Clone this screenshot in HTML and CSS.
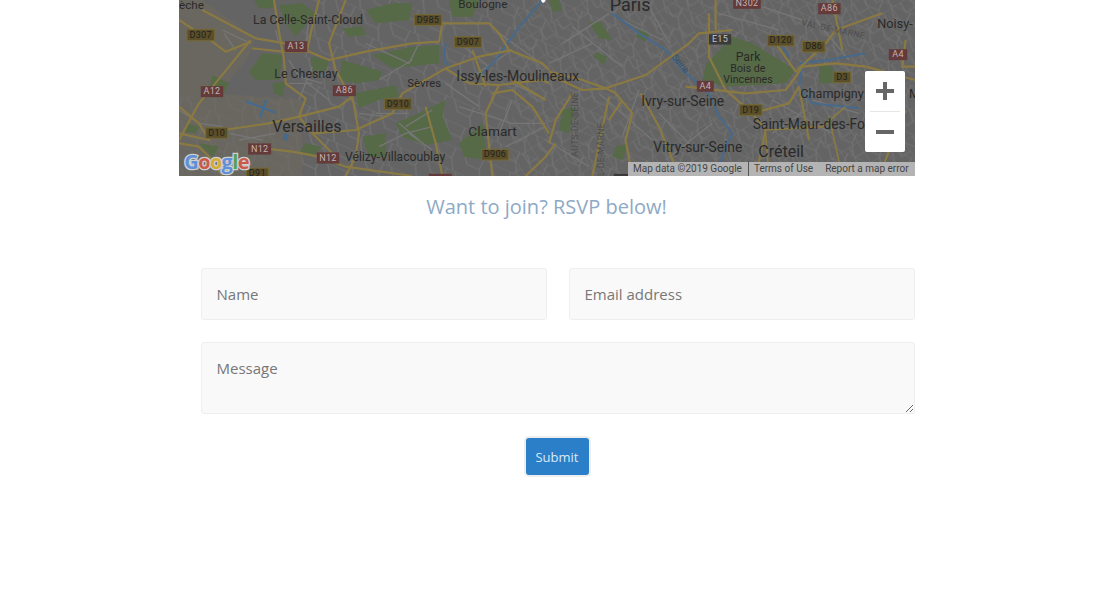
FILE: index.html
```html
<!DOCTYPE html>
<html lang="en">
<head>
<meta charset="utf-8">
<title>RSVP</title>
<link rel="stylesheet" href="styles.css">
</head>
<body>
<main class="page">
  <div class="map">
    <svg class="map-art" viewBox="0 0 2208 528" width="736" height="176" aria-label="Map of Paris and its south-west suburbs">
      <defs>
        <pattern id="streets" width="90" height="66" patternUnits="userSpaceOnUse" patternTransform="rotate(24)">
          <path d="M0 0H90M0 33H40L58 66M40 33V0M64 0L90 33" class="minor-thin"/>
        </pattern>
        <pattern id="streets2" width="60" height="72" patternUnits="userSpaceOnUse" patternTransform="rotate(-32)">
          <path d="M0 0H60M0 0V72M30 0V36H60" class="minor-thin"/>
        </pattern>
      </defs>
      <rect width="2208" height="528" class="land"/>
      <path d="M0 0H70L230 115L210 170L120 280L370 300L370 528H0Z" class="warm"/>
      <rect x="370" width="1838" height="528" fill="url(#streets)"/>
      <rect x="1000" width="1208" height="528" fill="url(#streets2)"/>
      <rect y="290" width="600" height="238" fill="url(#streets)" opacity=".5"/>

      <g class="green">
        <path d="M210 215L250 160L310 165L300 240L230 240Z"/>
        <path d="M300 15L370 10L410 40L350 110L320 70Z"/>
        <path d="M225 0H290L280 25L240 25Z"/>
        <path d="M100 225L150 250L130 290L90 270Z"/>
        <path d="M280 250L320 245L310 290L285 280Z"/>
        <path d="M490 85L550 80L560 105L510 110Z"/>
        <path d="M560 30L640 10L700 10L690 60L590 70Z"/>
        <path d="M395 170L450 180L440 215L400 210Z"/>
        <path d="M490 180L610 215L600 240L530 250L480 240Z"/>
        <path d="M530 280L650 255L660 290L600 300L540 325Z"/>
        <path d="M580 165L700 140L780 135L780 190L640 205Z"/>
        <path d="M650 370L720 340L800 300L790 350L820 420L740 435L670 410Z"/>
        <path d="M550 410L620 400L620 470L570 470Z"/>
        <path d="M840 430L910 370L925 480L855 470Z"/>
        <path d="M810 0H900L880 50L820 50Z"/>
        <path d="M20 370L60 380L50 400L20 395Z"/>
        <path d="M60 430L120 440L100 470Z"/>
        <path d="M380 430L430 440L400 470L360 460Z"/>
        <path d="M1230 65L1265 65L1300 120L1260 115Z"/>
        <path d="M1285 170L1275 195L1245 170L1250 155Z" />
        <path d="M1380 90L1410 100L1400 125L1370 110Z"/>
        <path d="M1580 195L1660 110L1720 130L1850 210L1820 250L1640 260L1570 240Z"/>
        <path d="M1150 330L1190 320L1170 400L1140 390Z"/>
        <path d="M1920 190L1960 200L1970 250L1920 250Z"/>
        <path d="M1310 440L1350 430L1330 480L1300 470Z"/>
        <path d="M1110 0H1140L1150 30L1120 35Z"/>
      </g>

      <g class="minor">
        <path d="M0 330L60 370L130 380M130 90L215 130M135 100L170 150M290 90L300 130M300 60L340 70M390 50L380 140M330 180L360 230L430 250M380 245L450 300M330 250L400 250M400 200L360 300M560 130L690 190L720 130M600 240L700 180M590 340L690 340M690 400L760 450M540 340L620 350M600 440L680 400L760 380M800 250L900 320M840 320L1000 370L1100 370M880 230L1000 150M960 100L1100 200M1000 250L1100 300M1000 300L960 400M980 440L1100 380M830 120L930 200M150 400L250 420M180 420L290 400M660 370L720 420M760 330L680 380"/>
        <path d="M1180 80L1330 200M1330 60L1450 120M1400 0L1470 130M1150 130L1290 40M1110 190L1240 130M1260 280L1420 420M1380 270L1330 410M1440 340L1540 440M1460 480L1600 370M1780 300L1960 400M1780 400L1880 330M1900 300L2040 340M1910 60L2010 180M1620 40L1800 90M1750 20L1870 60M1100 420L1230 500"/>
      </g>

      <g class="water">
        <path d="M1090 0L1010 95L950 180L900 230"/>
        <path d="M800 130L795 180L815 205"/>
        <path d="M1300 40L1380 100L1460 150L1510 210L1590 280L1620 350L1660 400L1640 440L1610 528"/>
        <path d="M1860 190L1950 180L2060 160M1870 200L1860 260L1900 310L2040 325"/>
        <path d="M1810 140L1830 170" />
      </g>
      <path class="water-thick" d="M323 402L318 420"/>
      <path class="plane" d="M200 304L290 338M262 298L243 352"/>

      <g class="road">
        <path d="M70 30L230 115L320 130L390 155L450 180L560 155L700 130L780 125L790 70L930 70L960 100L990 150L1090 190L1110 210"/>
        <path d="M215 120L150 200L60 310L0 420"/>
        <path d="M0 60L100 125L140 155L215 125"/>
        <path d="M220 145L310 155L390 155"/>
        <path d="M285 0L300 95L315 180L320 250L380 295L360 350L480 320L520 290L540 400L530 470L500 528"/>
        <path d="M420 0L395 100L385 150"/>
        <path d="M500 0L450 130L470 210L520 300"/>
        <path d="M0 320L60 370L90 420L0 400"/>
        <path d="M0 430L60 440L90 470L130 528"/>
        <path d="M100 395L270 370L360 350L400 400L530 390L640 340L670 280L800 205L900 170L1000 150"/>
        <path d="M210 440L340 455L420 470L500 500L700 528"/>
        <path d="M400 400L470 470"/>
        <path d="M800 205L870 250L960 255L1090 240L1110 250"/>
        <path d="M740 320L770 430L790 528"/>
        <path d="M960 255L920 340L940 528"/>
        <path d="M940 280L1000 270L1060 320L1110 400"/>
        <path d="M1000 240L1100 300"/>
        <path d="M880 150L920 260"/>
        <path d="M1040 528L1100 470L1130 430"/>
        <path d="M1110 215L1210 240L1280 265L1400 225L1530 130L1560 100L1660 90M1610 90L1610 0M1590 40L1590 170L1640 270M1110 225L1210 270L1280 265L1310 280L1360 340L1340 420L1360 528"/>
        <path d="M1385 280L1440 380L1500 528M1290 360L1330 300M1180 280L1130 360L1110 430M1290 290L1240 528"/>
        <path d="M1520 260L1700 280L1820 270L1850 230L1870 200L1970 190L2060 200"/>
        <path d="M1640 270L1720 340L1760 390L1730 528M1720 340L1830 310L1860 260L1890 420M1790 130L1850 215L1940 130L1970 90L2110 40"/>
        <path d="M1960 0L1990 150M2060 200L2208 240M2180 120L2170 200L2208 200M2100 528L2180 330"/>
      </g>
      <path class="road-thin" d="M1760 390L1930 380L2000 320M1950 350L1990 528M1760 400L1770 528"/>

      <g class="label">
        <text x="0" y="26" class="t36">èche</text>
        <text x="222" y="73" class="t38">La Celle-Saint-Cloud</text>
        <text x="838" y="23" class="t36">Boulogne</text>
        <text x="286" y="235" class="t38">Le Chesnay</text>
        <text x="685" y="260" class="t34">Sèvres</text>
        <text x="832" y="242" class="t44">Issy-les-Moulineaux</text>
        <text x="280" y="396" class="t50">Versailles</text>
        <text x="868" y="407" class="t44b">Clamart</text>
        <text x="498" y="483" class="t36b">Vélizy-Villacoublay</text>
        <text x="1292" y="32" class="t52">Paris</text>
        <text x="1670" y="183" class="t38">Park</text>
        <text x="1654" y="217" class="t32">Bois de</text>
        <text x="1633" y="250" class="t32">Vincennes</text>
        <text x="1387" y="317" class="t42">Ivry-sur-Seine</text>
        <text x="1864" y="293" class="t42b">Champigny</text>
        <text x="2190" y="293" class="t42b">Ma</text>
        <text x="1721" y="387" class="t42">Saint-Maur-des-Fo</text>
        <text x="1423" y="457" class="t42">Vitry-sur-Seine</text>
        <text x="1738" y="472" class="t50">Créteil</text>
        <text x="2095" y="84" class="t42b">Noisy-</text>
        <text x="1866" y="76" class="area" transform="rotate(12 1866 76)">VAL-DE-MARNE</text>
        <text x="1196" y="470" class="area" transform="rotate(-90 1196 470)">AUTS-DE-SEINE</text>
        <text x="1275" y="528" class="area" transform="rotate(-90 1275 528)">L-DE-MARNE</text>
        <text x="1478" y="172" class="river" transform="rotate(50 1478 172)">Seine</text>
      </g>

      <g class="shield-d">
        <rect x="24" y="88" width="82" height="34"/><text x="65" y="113">D307</text>
        <rect x="706" y="44" width="82" height="32"/><text x="747" y="68">D985</text>
        <rect x="826" y="110" width="82" height="32"/><text x="867" y="134">D907</text>
        <rect x="616" y="296" width="82" height="32"/><text x="657" y="320">D910</text>
        <rect x="80" y="383" width="66" height="32"/><text x="113" y="407">D10</text>
        <rect x="908" y="448" width="80" height="32"/><text x="948" y="472">D906</text>
        <rect x="202" y="504" width="66" height="30"/><text x="235" y="528">D91</text>
        <rect x="1765" y="106" width="80" height="32"/><text x="1805" y="130">D120</text>
        <rect x="1870" y="124" width="68" height="32"/><text x="1904" y="148">D86</text>
        <rect x="1963" y="216" width="52" height="32"/><text x="1989" y="240">D3</text>
        <rect x="1681" y="314" width="68" height="32"/><text x="1715" y="338">D19</text>
      </g>
      <g class="shield-a">
        <rect x="318" y="124" width="66" height="32"/><text x="351" y="148">A13</text>
        <rect x="66" y="259" width="66" height="32"/><text x="99" y="283">A12</text>
        <rect x="462" y="256" width="68" height="32"/><text x="496" y="280">A86</text>
        <rect x="208" y="431" width="68" height="32"/><text x="242" y="455">N12</text>
        <rect x="414" y="458" width="66" height="32"/><text x="447" y="482">N12</text>
        <rect x="750" y="522" width="68" height="20"/>
        <rect x="1663" y="-6" width="82" height="32"/><text x="1704" y="18">N302</text>
        <rect x="1918" y="10" width="66" height="32"/><text x="1951" y="34">A86</text>
        <rect x="1554" y="243" width="50" height="32"/><text x="1579" y="267">A4</text>
        <rect x="2130" y="148" width="54" height="32"/><text x="2157" y="172">A4</text>
      </g>
      <g class="shield-e">
        <rect x="1590" y="103" width="66" height="30"/><text x="1623" y="126">E15</text>
        <rect x="1305" y="522" width="44" height="12"/>
      </g>
      <path class="pin" d="M1086 0H1100L1097 6L1092 9L1088 5Z"/>
      <text x="16" y="508" class="google">
        <tspan class="g-blue">G</tspan><tspan class="g-red">o</tspan><tspan class="g-yellow">o</tspan><tspan class="g-blue">g</tspan><tspan class="g-green">l</tspan><tspan class="g-red">e</tspan>
      </text>
    </svg>
    <div class="attribution">
      <span class="attr-item attr-data">Map data ©2019 Google</span>
      <span class="attr-item">Terms of Use</span>
      <span class="attr-item attr-last">Report a map error</span>
    </div>
    <div class="zoom-control">
      <button class="zoom-btn" type="button" aria-label="Zoom in">
        <svg width="20" height="20" viewBox="0 0 20 20"><path d="M1 8H8V1H12V8H19V12H12V19H8V12H1Z"/></svg>
      </button>
      <span class="zoom-sep"></span>
      <button class="zoom-btn" type="button" aria-label="Zoom out">
        <svg width="20" height="20" viewBox="0 0 20 20"><path d="M1 8H19V12H1Z"/></svg>
      </button>
    </div>
  </div>
  <h2 class="title">Want to join? RSVP below!</h2>
  <form class="form">
    <div class="form-row">
      <input class="field" type="text" placeholder="Name">
      <input class="field" type="email" placeholder="Email address">
    </div>
    <textarea class="field message" placeholder="Message"></textarea>
    <button class="submit" type="button">Submit</button>
  </form>
</main>
</body>
</html>
```

FILE: styles.css
```css
* {
  box-sizing: border-box;
}

body {
  margin: 0;
  background: #fff;
  font-family: "Open Sans", sans-serif;
}

.page {
  width: 736px;
  margin-left: 179px;
}

.map {
  position: relative;
  height: 176px;
  overflow: hidden;
  background: #636363;
}

.map-art {
  display: block;
  font-family: Roboto, sans-serif;
}

.land { fill: #646464; }
.warm { fill: #696760; }
.green path { fill: #566a47; }
.minor-thin { fill: none; stroke: #727272; stroke-width: 3.5; }
.minor path { fill: none; stroke: #767676; stroke-width: 4; }
.water path { fill: none; stroke: #46698c; stroke-width: 6; }
.water-thick { fill: none; stroke: #46698c; stroke-width: 14; }
.plane { fill: none; stroke: #3f6b94; stroke-width: 6; }
.road path { fill: none; stroke: #8a7a42; stroke-width: 6.5; stroke-linejoin: round; }
.road-thin { fill: none; stroke: #8a7a42; stroke-width: 5; }

.label text {
  fill: #2a2a2a;
}
.t32 { font-size: 32px; }
.t34 { font-size: 34px; }
.t36 { font-size: 35px; }
.t36b { font-size: 36.500px; }
.t38 { font-size: 37px; }
.t42 { font-size: 41.500px; }
.t42b { font-size: 38px; }
.t44 { font-size: 42px; }
.t44b { font-size: 41px; }
.t50 { font-size: 48px; }
.t52 { font-size: 54px; }
.label .area { font-size: 26px; fill: #4e4e4e; letter-spacing: 1px; }
.label .river { font-size: 26px; fill: #2f4d6b; }

.shield-d text, .shield-a text, .shield-e text {
  font-size: 27px;
  text-anchor: middle;
  letter-spacing: 1px;
}
.shield-d rect { fill: #5a4f29; stroke: #756836; stroke-width: 3; }
.shield-d text { fill: #1f1f1f; }
.shield-a rect { fill: #643a3a; stroke: #643a3a; }
.shield-a text { fill: #c4b2b2; }
.shield-e rect { fill: #3b3b3b; stroke: #3b3b3b; }
.shield-e text { fill: #c4c4c4; }
.pin { fill: #fff; }

.google {
  font-family: "Open Sans", sans-serif;
  font-size: 60px;
  font-weight: 700;
  letter-spacing: -2px;
  stroke: #cfcfcf;
  stroke-width: 8px;
  paint-order: stroke;
}
.g-blue { fill: #5f8fd8; }
.g-red { fill: #cc5a4a; }
.g-yellow { fill: #d6ab35; }
.g-green { fill: #55a05a; }

.attribution {
  position: absolute;
  right: 0;
  bottom: 0;
  display: flex;
  width: 287px;
  height: 14px;
  background: #b4b4b4;
  color: #444;
  font: 10px/14px Roboto, sans-serif;
}

.attr-item {
  padding: 0 6px 0 5px;
  white-space: nowrap;
}

.attr-data {
  padding-right: 6px;
  border-right: 1px solid #555;
}

.attr-last {
  padding-left: 6px;
}

.zoom-control {
  position: absolute;
  top: 71px;
  left: 686px;
  display: flex;
  flex-direction: column;
  width: 40px;
  height: 81px;
  background: #fff;
  border-radius: 2px;
}

.zoom-btn {
  display: flex;
  flex: 1;
  align-items: center;
  justify-content: center;
  padding: 0;
  border: 0;
  background: transparent;
}

.zoom-btn path { fill: #666; }

.zoom-sep {
  height: 1px;
  margin: 0 5px;
  background: #e6e6e6;
}

.title {
  margin: 16px 0 46px;
  padding-right: 1px;
  color: #8ea9c5;
  font-size: 20px;
  font-weight: 400;
  line-height: 30px;
  text-align: center;
}

.form {
  display: flex;
  flex-direction: column;
  gap: 22px;
  padding-left: 22px;
}

.form-row {
  display: flex;
  gap: 22px;
}

.field {
  width: 100%;
  min-width: 0;
  height: 52px;
  padding: 0 14.500px;
  border: 1px solid #eee;
  border-radius: 3px;
  background: #f9f9f9;
  color: #777;
  font-family: "Open Sans", sans-serif;
  font-size: 15px;
  outline: 0;
}

.field::placeholder {
  color: #777;
  opacity: 1;
}

.message {
  display: block;
  height: 72px;
  padding: 14px 14.500px;
  line-height: 22px;
}

.submit {
  align-self: center;
  width: 67px;
  height: 41px;
  margin-right: 2px;
  padding: 0;
  border: 2px solid #eee;
  border-radius: 5px;
  background: #2a7fc8;
  color: #dbe9f6;
  font-family: "Open Sans", sans-serif;
  font-size: 13px;
}
```
